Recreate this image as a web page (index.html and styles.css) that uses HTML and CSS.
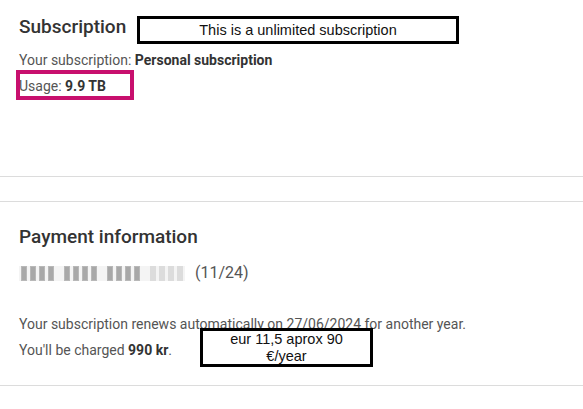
FILE: index.html
```html
<!DOCTYPE html>
<html lang="en">
<head>
<meta charset="utf-8">
<title>Subscription</title>
<link rel="stylesheet" href="styles.css">
</head>
<body>
<main class="page">
  <section class="card card-sub">
    <h2 class="title">Subscription</h2>
    <p class="line">Your subscription: <b>Personal subscription</b></p>
    <p class="line">Usage: <b>9.9 TB</b></p>
    <div class="note note-unlimited">This is a unlimited subscription</div>
    <div class="highlight"></div>
  </section>
  <section class="card card-pay">
    <h2 class="title">Payment information</h2>
    <div class="cardrow">
      <span class="masked">
        <span class="grp"><i></i><i></i><i></i><i></i></span>
        <span class="grp"><i></i><i></i><i></i><i></i></span>
        <span class="grp"><i></i><i></i><i></i><i></i></span>
        <span class="grp light"><i></i><i></i><i></i><i></i></span>
      </span>
      <span class="expiry">(11/24)</span>
    </div>
    <p class="line renew">Your subscription renews automatically on 27/06/2024 for another year.</p>
    <p class="line">You'll be charged <b>990 kr</b>.</p>
    <div class="note note-price">eur 11,5 aprox 90<br>€/year</div>
  </section>
</main>
</body>
</html>
```

FILE: styles.css
```css
html, body {
  margin: 0;
  padding: 0;
  background: #ffffff;
}

body {
  font-family: Roboto, "Liberation Sans", Arial, sans-serif;
  color: #555555;
}

.page {
  display: flex;
  flex-direction: column;
  gap: 24px;
}

.card {
  position: relative;
  padding: 0 19px;
  background: #ffffff;
}

.card-sub {
  padding-top: 15px;
  padding-bottom: 77px;
  border-bottom: 1px solid #dcdcdc;
}

.card-pay {
  padding-top: 23px;
  padding-bottom: 22px;
  border-top: 1px solid #dcdcdc;
  border-bottom: 1px solid #dcdcdc;
}

.title {
  margin: 0 0 8px;
  font-size: 19px;
  line-height: 24px;
  font-weight: 500;
  color: #333333;
}

.line {
  margin: 0;
  font-size: 14px;
  line-height: 26px;
  color: #555555;
}

.line b {
  font-weight: 700;
  color: #333333;
}

.cardrow {
  display: flex;
  align-items: center;
  gap: 10px;
  margin: 12px 0 26px;
  height: 24px;
}

.masked {
  display: flex;
  gap: 6px;
  height: 15px;
  align-items: stretch;
  background: #f4f4f4;
}

.grp {
  display: flex;
  gap: 3px;
  padding: 0 2px;
}

.grp i {
  display: block;
  width: 6px;
  background: #a8a8a8;
  box-shadow: inset 0 0 0 1px #b8b8b8;
}

.grp.light i {
  background: #dcdcdc;
  box-shadow: none;
}

.expiry {
  font-size: 16px;
  line-height: 24px;
  color: #555555;
}

.note {
  position: absolute;
  box-sizing: border-box;
  border: 3px solid #000000;
  background: #ffffff;
  font-family: "Liberation Sans", Arial, sans-serif;
  font-size: 14.5px;
  color: #111111;
  text-align: center;
}

.note-unlimited {
  left: 137px;
  top: 16px;
  width: 322px;
  height: 28px;
  line-height: 22px;
}

.note-price {
  left: 200px;
  top: 126px;
  width: 173px;
  height: 39px;
  line-height: 16.5px;
}

.highlight {
  position: absolute;
  left: 16px;
  top: 70px;
  width: 118px;
  height: 30px;
  box-sizing: border-box;
  border: 4px solid #c8106e;
}
```
